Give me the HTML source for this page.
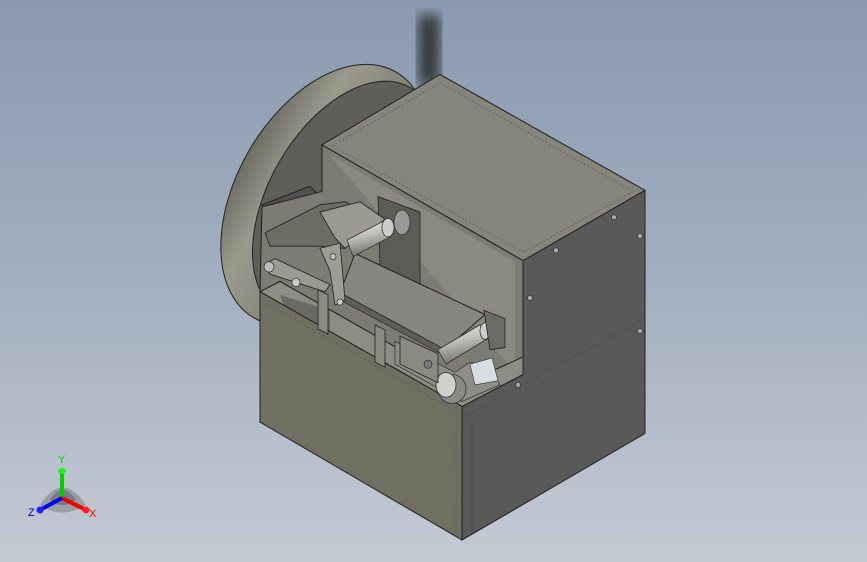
<!DOCTYPE html>
<html><head><meta charset="utf-8"><style>
html,body{margin:0;padding:0;width:867px;height:562px;overflow:hidden}
body{background:linear-gradient(180deg,#8a99ae 0%,#a3afc0 50%,#c4cad4 100%)}
svg{position:absolute;left:0;top:0}
</style></head><body>
<svg width="867" height="562" viewBox="0 0 867 562" xmlns="http://www.w3.org/2000/svg">
<defs>
<filter id="bl"><feGaussianBlur stdDeviation="6"/></filter>
<linearGradient id="cyl" x1="0" y1="0" x2="0.3" y2="1"><stop offset="0" stop-color="#eee"/><stop offset="0.5" stop-color="#bdbdb8"/><stop offset="1" stop-color="#6e6e6a"/></linearGradient>
<linearGradient id="disk" x1="0" y1="0" x2="1" y2="0"><stop offset="0" stop-color="#6d6d63"/><stop offset="0.25" stop-color="#9a9a8c"/><stop offset="1" stop-color="#6a6a62"/></linearGradient>
</defs>
<rect x="418" y="15" width="22" height="70" fill="#2d3035" filter="url(#bl)" opacity="0.9"/>
<ellipse cx="325" cy="195" rx="88" ry="142" transform="rotate(30 325 195)" fill="url(#disk)" stroke="#222" stroke-width="1"/>
<ellipse cx="345" cy="200" rx="76" ry="130" transform="rotate(30 345 200)" fill="#5f5f5a" stroke="#222" stroke-width="1"/>
<g transform="scale(1 1.0345)">
<polygon points="262,198 310,180 320,190 322,290 265,292" fill="#505050" stroke="#222" stroke-width="1"/>
<polygon points="322,140 440,72 645,184 523,252" fill="#85857c" stroke="#222" stroke-width="1"/>
<polygon points="332,141 440,80 633,185 524,244" fill="none" stroke="#555" stroke-width="0.6" stroke-dasharray="2,2"/>
<polygon points="523,252 645,184 645,419 462,522 462,393 523,362" fill="#595959" stroke="#222" stroke-width="1"/>
<line x1="462" y1="404" x2="640" y2="310" stroke="#444" stroke-width="0.6" stroke-dasharray="2,2"/>
<line x1="472" y1="410" x2="472" y2="515" stroke="#444" stroke-width="0.6"/>
<polygon points="322,140 523,252 523,362 462,393 260,282 262,200 322,185" fill="#7c7c72" stroke="#222" stroke-width="1"/>
<polygon points="330,150 515,253 515,360" fill="#8a8a80"/>
<polygon points="378,190 420,205 420,275 380,258" fill="#5d5d58" stroke="#222" stroke-width="0.8"/>
<polygon points="260,282 280,272 462,372 523,345 523,362 462,393" fill="#8d8d84" stroke="#222" stroke-width="1"/>
<polygon points="280,285 330,300 330,325 285,300" fill="#6a6a64"/>
<polygon points="395,330 455,360 470,350 490,355 500,372 462,388 395,352" fill="#8e8e88" stroke="#222" stroke-width="0.6"/>
<polygon points="470,352 492,346 498,368 475,372" fill="#d8dde2" stroke="#333" stroke-width="0.6"/>
<polygon points="260,282 462,393 462,522 260,408" fill="#6f6f62" stroke="#222" stroke-width="1"/>
<polyline points="266,293 456,398 456,515" fill="none" stroke="#555" stroke-width="0.6" stroke-dasharray="2,2"/>
<polygon points="355,245 485,304 445,338 340,283" fill="#868680" stroke="#222" stroke-width="1"/>
<polygon points="340,283 445,338 445,344 340,290" fill="#5e5e5a" stroke="#222" stroke-width="0.6"/>
<polygon points="438,338 480,314 490,326 446,352" fill="url(#cyl)" stroke="#333" stroke-width="0.8"/>
<ellipse cx="485" cy="320" rx="5" ry="8" fill="#ccc" stroke="#333" stroke-width="0.8"/>
<ellipse cx="452" cy="376" rx="14" ry="14" fill="#8a8a85" stroke="#333" stroke-width="0.8"/>
<ellipse cx="446" cy="372" rx="10" ry="12" fill="#cfcfcc" stroke="#333" stroke-width="0.8"/>
<polygon points="400,325 438,342 438,370 400,352" fill="#8a8a82" stroke="#222" stroke-width="0.8"/>
<circle cx="428" cy="352" r="4" fill="#777" stroke="#222" stroke-width="0.6"/>
<polygon points="484,300 505,308 505,336 490,338" fill="#6c6c66" stroke="#222" stroke-width="0.8"/>
<polygon points="318,280 328,285 328,323 318,318" fill="#8a8a82" stroke="#222" stroke-width="0.8"/>
<polygon points="375,314 385,319 385,355 375,350" fill="#8a8a82" stroke="#222" stroke-width="0.8"/>
<polygon points="265,225 320,198 345,195 378,212 345,240 320,238 270,238" fill="#6d6d66" stroke="#222" stroke-width="0.8"/>
<polygon points="320,205 360,195 385,212 345,240 335,230" fill="#9a9a92" stroke="#222" stroke-width="0.8"/>
<polygon points="265,255 275,250 330,275 325,282 270,265" fill="#9a9a92" stroke="#222" stroke-width="0.8"/>
<polygon points="320,240 340,235 345,290 335,295 330,262" fill="#9d9d95" stroke="#222" stroke-width="0.8"/>
<circle cx="269" cy="258" r="5" fill="#bbb" stroke="#222" stroke-width="0.6"/>
<circle cx="296" cy="273" r="4" fill="#ccc" stroke="#222" stroke-width="0.6"/>
<circle cx="333" cy="248" r="3" fill="#bbb" stroke="#222" stroke-width="0.6"/>
<circle cx="340" cy="292" r="3" fill="#ccc" stroke="#222" stroke-width="0.6"/>
<polygon points="347,232 383,214 392,228 353,248" fill="url(#cyl)" stroke="#333" stroke-width="0.8"/>
<ellipse cx="388" cy="220" rx="6" ry="9" fill="#ccc" stroke="#333" stroke-width="0.8"/>
<ellipse cx="402" cy="215" rx="8" ry="12" fill="#999" stroke="#333" stroke-width="0.8"/>
<g fill="#aaa" stroke="#222" stroke-width="0.6">
<circle cx="614" cy="210" r="2.5"/><circle cx="640" cy="228" r="2.5"/><circle cx="556" cy="242" r="2.5"/><circle cx="530" cy="288" r="2.5"/><circle cx="640" cy="320" r="2.5"/><circle cx="518" cy="372" r="2.5"/>
</g>
</g>
<path d="M40,505 Q62,470 86,505 Q62,520 40,505Z" fill="#8a8c90" opacity="0.7"/>
<path d="M50,500 Q62,480 76,500 Q62,510 50,500Z" fill="#6a6c70" opacity="0.7"/>
<line x1="62" y1="498" x2="62" y2="472" stroke="#0c0" stroke-width="4"/>
<ellipse cx="62" cy="471" rx="4" ry="3" fill="#2e2"/>
<line x1="62" y1="498" x2="86" y2="510" stroke="#e00" stroke-width="4"/>
<circle cx="86" cy="510" r="3.5" fill="#f22"/>
<line x1="62" y1="498" x2="40" y2="510" stroke="#00e" stroke-width="4"/>
<circle cx="40" cy="510" r="3.5" fill="#22f"/>
<text x="58" y="463" font-family="Liberation Sans, sans-serif" font-size="11" fill="#0c0">Y</text>
<text x="89" y="517" font-family="Liberation Sans, sans-serif" font-size="11" fill="#e00">X</text>
<text x="28" y="516" font-family="Liberation Sans, sans-serif" font-size="11" fill="#00c">Z</text>
</svg>
</body></html>
